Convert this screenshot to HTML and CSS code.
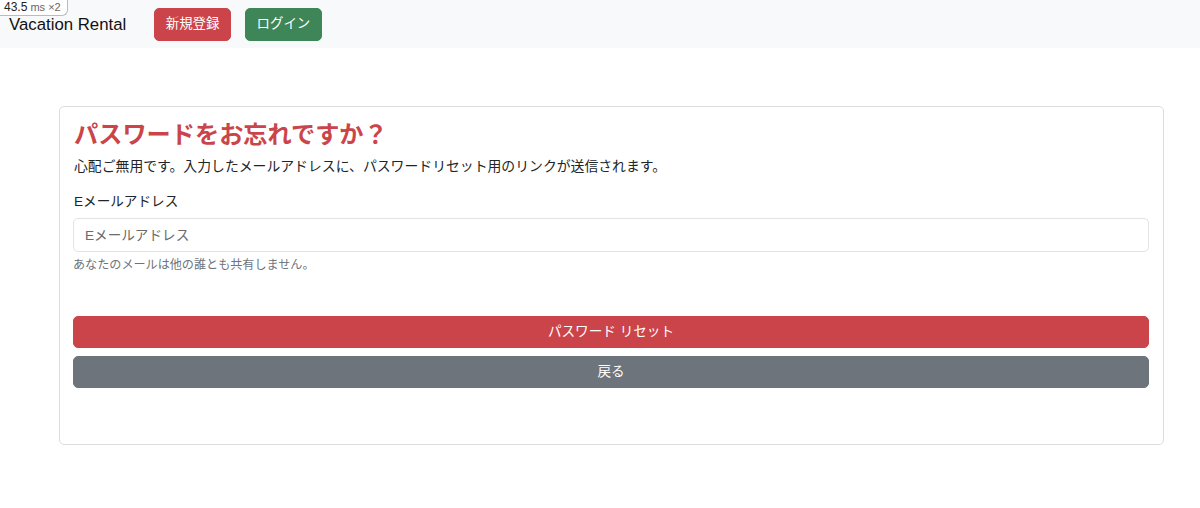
FILE: index.html
```html
<!DOCTYPE html>
<html lang="ja">
<head>
<meta charset="utf-8">
<title>Vacation Rental</title>
<link rel="stylesheet" href="styles.css">
</head>
<body>
<div class="perf-badge"><b>43.5</b> ms ×2</div>
<nav class="navbar">
  <span class="brand">Vacation Rental</span>
  <a class="btn btn-danger nav-btn">新規登録</a>
  <a class="btn btn-success nav-btn">ログイン</a>
</nav>
<main class="page">
  <section class="card">
    <h3 class="title">パスワードをお忘れですか？</h3>
    <p class="lead-text">心配ご無用です。入力したメールアドレスに、パスワードリセット用のリンクが送信されます。</p>
    <form class="form">
      <label class="label" for="email">Eメールアドレス</label>
      <input class="input" id="email" type="email" placeholder="Eメールアドレス">
      <small class="help">あなたのメールは他の誰とも共有しません。</small>
      <div class="actions">
        <button type="button" class="btn btn-danger block">パスワード リセット</button>
        <button type="button" class="btn btn-secondary block">戻る</button>
      </div>
    </form>
  </section>
</main>
</body>
</html>
```
FILE: styles.css
```css
* { box-sizing: border-box; }
html, body { margin: 0; padding: 0; }
body {
  font-family: "Liberation Sans", "Noto Sans CJK JP", sans-serif;
  font-size: 13.44px;
  line-height: 20px;
  color: #212529;
  background: #fff;
  width: 1200px;
  height: 508px;
  overflow: hidden;
  position: relative;
}
.perf-badge {
  position: absolute;
  left: 0; top: 0;
  height: 16px;
  padding: 0 6px 0 4px;
  background: #fff;
  border: 1px solid #bbb;
  border-top: none; border-left: none;
  border-bottom-right-radius: 6px;
  font-size: 11px;
  line-height: 15px;
  color: #666;
  z-index: 10;
}
.perf-badge b { color: #222; font-weight: normal; font-size: 12px; }
.navbar {
  height: 48px;
  background: #f8f9fa;
  display: flex;
  align-items: center;
  padding: 0 0 0 9px;
}
.brand {
  font-size: 16.8px;
  line-height: 24px;
  color: #111;
  margin-right: 28px;
  padding-top: 2px;
}
.btn {
  display: inline-flex;
  align-items: center;
  justify-content: center;
  font-family: "Liberation Sans", "Noto Sans CJK JP", sans-serif;
  font-size: 13.6px;
  line-height: 20px;
  color: #fff;
  border: 1px solid transparent;
  border-radius: 5px;
  cursor: pointer;
}
.nav-btn { height: 33px; padding: 0 10.5px; margin-right: 14px; font-size: 13.44px; }
.btn-danger { background: #cb444a; border-color: #cb444a; }
.btn-success { background: #3e8657; border-color: #3e8657; }
.btn-secondary { background: #6d747c; border-color: #6d747c; }
.page { padding: 58px 0 0 59px; }
.card {
  width: 1105px;
  height: 339px;
  border: 1px solid #dcdcdc;
  border-radius: 5px;
  padding: 13px 14px 13px 13px;
}
.title {
  margin: 0;
  font-size: 24.2px;
  line-height: 29px;
  font-weight: bold;
  color: #cb444a;
  padding-left: 1px;
}
.lead-text { margin: 7px 0 0 1px; line-height: 20px; font-size: 13.85px; }
.form { display: flex; flex-direction: column; margin-top: 16px; }
.label { line-height: 20px; margin-left: 1px; font-size: 13.6px; }
.input {
  margin-top: 6px;
  height: 34px;
  border: 1px solid #e3e3e3;
  border-radius: 5px;
  padding: 0 11px;
  font-family: "Liberation Sans", "Noto Sans CJK JP", sans-serif;
  font-size: 13.6px;
  color: #212529;
  outline: none;
}
.input::placeholder { color: #6a6a6a; }
.help { margin-top: 4px; font-size: 12.1px; line-height: 18px; color: #6c757d; }
.actions { display: flex; flex-direction: column; gap: 8px; margin-top: 42px; }
.block { width: 100%; height: 32px; padding: 0; }
```
